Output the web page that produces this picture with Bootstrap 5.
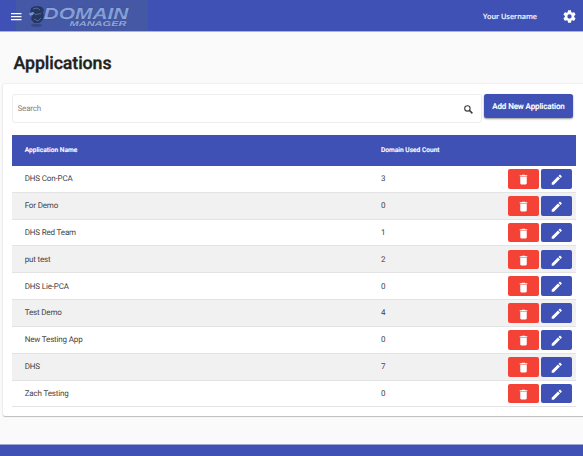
<!DOCTYPE html>
<html lang="en">
<head>
<meta charset="utf-8">
<meta name="viewport" content="width=device-width, initial-scale=1">
<title>Domain Manager</title>
<link href="https://cdn.jsdelivr.net/npm/bootstrap@5.3.0/dist/css/bootstrap.min.css" rel="stylesheet">
<style>
:root { --indigo: #3f51b5; --warn: #f44336; }
body { font-family: Roboto, sans-serif; font-size: 8px; line-height: 1.3; background: #fafafa; color: #444; height: 456px; overflow: hidden; text-rendering: geometricPrecision; }
.topbar { height: 31px; background: var(--indigo); color: #fff; padding-left: 10.5px; padding-right: 7px; box-shadow: 0 1px 0 #a9b1dd; flex: none; }
.menu-btn, .gear-btn { line-height: 0; color: #fff; padding-top: 1px; }
.brand-logo { margin-left: -5.5px; background: #4558a6; }
.menu-btn { z-index: 1; }
.username { font-family: "Noto Sans", sans-serif; font-size: 7.3px; font-weight: 500; color: #f4f5fd; margin-right: 26px; padding-top: 4px; -webkit-text-stroke: .15px #f4f5fd; }
.page-title { font-size: 17.8px; font-weight: 500; line-height: 22px; color: #212121; margin: 22px 0 0 13.5px; letter-spacing: -.1px; -webkit-text-stroke: .35px #212121; }
.panel { margin: 9px 0 0 3px; height: 332px; width: 600px; padding: 10px 0 0 9px; background: #fff; border-radius: 2px; box-shadow: 0 1px 1px rgba(0,0,0,.22), 0 0 2px rgba(0,0,0,.14); flex: none; }
.search-box { width: 470px; height: 29px; border: 1px solid #ededed; border-radius: 3px; padding: 2px 8px 0 4.5px; }
.search-box input { font-size: 8px; color: #444; outline: 0; letter-spacing: -.16px; text-rendering: geometricPrecision; }
.search-box input::placeholder { color: #858585; opacity: 1; }
.add-btn { width: 89px; height: 24px; margin-left: 2px; padding: 0; border-radius: 2.5px; background: var(--indigo); color: #fff; font-size: 8px; font-weight: 500; line-height: 26px; letter-spacing: -.12px; white-space: nowrap; box-shadow: 0 1px 2px rgba(0,0,0,.4); -webkit-text-stroke: .15px #fff; text-rendering: geometricPrecision; }
.app-table { width: 563.5px; margin-top: 12px; }
.table-head { height: 31px; background: var(--indigo); color: #fff; font-size: 6.6px; font-weight: 500; padding-bottom: 1px; -webkit-text-stroke: .15px #fff; }
.app-row { height: 26.83px; border-bottom: 1px solid #e3e3e3; letter-spacing: -.16px; }
.app-row > div { padding-top: 1px; }
.app-row:nth-child(odd) { background: #f1f1f1; }
.name-col { width: 369px; padding-left: 12.7px; }
.tool-btn { width: 31px; height: 19.6px; padding: 2px 0 0; border-radius: 2px; line-height: 0; color: #fff; display: flex; align-items: center; justify-content: center; }
.tool-delete { background: var(--warn); }
.tool-edit { background: var(--indigo); margin-left: 2px; margin-right: 3.5px; }
.footer-bar { height: 11.5px; background: var(--indigo); box-shadow: 0 -1px 0 #9da7d8; }
</style>
</head>
<body class="d-flex flex-column">
<svg class="d-none">
  <symbol id="trash" viewBox="0 0 24 24"><path fill="currentColor" d="M6 19c0 1.100.9 2 2 2h8c1.100 0 2-.9 2-2V7H6v12zM19 4h-3.500l-1-1h-5l-1 1H5v2h14V4z"/></symbol>
  <symbol id="pencil" viewBox="0 0 24 24"><path fill="currentColor" d="M3 17.250V21h3.750L17.810 9.940l-3.750-3.750L3 17.250zM20.710 7.040a1 1 0 0 0 0-1.410l-2.340-2.340a1 1 0 0 0-1.410 0l-1.830 1.830 3.750 3.750 1.830-1.830z"/></symbol>
</svg>

<header class="topbar d-flex align-items-center">
  <a class="menu-btn position-relative" href="#" aria-label="Menu">
    <svg width="11" height="9" viewBox="0 0 11 9"><path fill="#fff" d="M0 1h10.500v1.200H0zM0 4h10.500v1.200H0zM0 7h10.500v1.200H0z"/></svg>
  </a>
  <svg class="brand-logo" width="132" height="31" viewBox="0 0 132 31">
    <defs><linearGradient id="steel" x1="0" y1="0" x2="0" y2="1"><stop offset="0" stop-color="#93abe0"/><stop offset=".5" stop-color="#7c98d5"/><stop offset="1" stop-color="#a0b5de"/></linearGradient></defs>
    <ellipse cx="20.500" cy="25.500" rx="5.500" ry="1.400" fill="#354788"/>
    <path fill="#273660" d="M15 8l3-1.500 4-.5 4 1 2 3-1 2 1 4-2 5-3 2h-5l-3-4 1-3-2-3z"/>
    <path fill="none" stroke="#5878b0" stroke-width=".8" d="M17 9l4-1 3 2M16 12.500l4 2 5-1M18 19l4 2 3-3"/>
    <path fill="#7696cc" d="M13 13l5-1-1 3-3 .8z"/>
    <g font-family="Liberation Sans, sans-serif" font-weight="700" font-style="italic">
      <text x="27.500" y="18.800" font-size="16" textLength="85" lengthAdjust="spacingAndGlyphs" fill="url(#steel)" stroke="#36487e" stroke-width=".7" paint-order="stroke">DOMAIN</text>
      <text x="53.500" y="25.500" font-size="7" textLength="57" lengthAdjust="spacingAndGlyphs" fill="#90a8da" stroke="#3a4b87" stroke-width=".4" paint-order="stroke">MANAGER</text>
    </g>
  </svg>
  <span class="username ms-auto">Your Username</span>
  <a class="gear-btn" href="#" aria-label="Settings">
    <svg width="13" height="13" viewBox="1.500 1.500 21 21"><path fill="#fff" d="M19.430 12.980c.04-.32.07-.64.07-.98s-.03-.66-.07-.98l2.110-1.650c.19-.15.240-.42.120-.64l-2-3.460c-.12-.22-.39-.3-.61-.22l-2.490 1c-.52-.4-1.080-.73-1.690-.98l-.38-2.650A.49.49 0 0 0 14 2h-4c-.25 0-.46.180-.49.420l-.38 2.650c-.61.250-1.170.590-1.690.980l-2.490-1c-.23-.09-.49 0-.61.220l-2 3.460c-.13.220-.07.490.120.640l2.110 1.650c-.04.320-.07.650-.07.980s.03.660.07.980l-2.110 1.650c-.19.150-.24.420-.12.640l2 3.460c.12.220.39.300.61.220l2.490-1c.52.400 1.080.730 1.690.980l.38 2.650c.03.240.24.420.49.420h4c.25 0 .46-.18.490-.42l.38-2.650c.61-.25 1.170-.59 1.690-.98l2.490 1c.23.090.49 0 .61-.22l2-3.460c.12-.22.070-.49-.12-.64zM12 15.500a3.500 3.500 0 1 1 0-7 3.500 3.500 0 0 1 0 7z"/></svg>
  </a>
</header>

<h1 class="page-title">Applications</h1>

<main class="panel">
  <div class="d-flex">
    <label class="search-box d-flex align-items-center">
      <input class="border-0 p-0 flex-grow-1 bg-transparent" type="text" placeholder="Search">
      <svg width="9" height="9" viewBox="0 0 9 9" fill="none" stroke="#3f3f3f"><circle cx="3.400" cy="3.400" r="2.700" stroke-width="1.100"/><path stroke-width="1.500" d="M5.400 5.400l3 3"/></svg>
    </label>
    <button class="btn add-btn border-0" type="button">Add New Application</button>
  </div>
  <div class="app-table">
    <div class="table-head d-flex align-items-center"><div class="name-col">Application Name</div><div>Domain Used Count</div></div>
  </div>
</main>
<footer class="footer-bar mt-auto flex-shrink-0"></footer>

<script>
const applications = [
  ["DHS Con-PCA", 3], ["For Demo", 0], ["DHS Red Team", 1], ["put test", 2], ["DHS Lie-PCA", 0],
  ["Test Demo", 4], ["New Testing App", 0], ["DHS", 7], ["Zach Testing", 0]
];
document.querySelector(".app-table").insertAdjacentHTML("beforeend", applications.map(([name, count]) => `
  <div class="app-row d-flex align-items-center">
    <div class="name-col">${name}</div><div>${count}</div>
    <button class="btn tool-btn tool-delete border-0 ms-auto" aria-label="Delete"><svg width="13" height="13"><use href="#trash"/></svg></button>
    <button class="btn tool-btn tool-edit border-0" aria-label="Edit"><svg width="13.500" height="13.500"><use href="#pencil"/></svg></button>
  </div>`).join(""));
</script>
<script src="https://cdn.jsdelivr.net/npm/bootstrap@5.3.0/dist/js/bootstrap.bundle.min.js"></script>
</body>
</html>
